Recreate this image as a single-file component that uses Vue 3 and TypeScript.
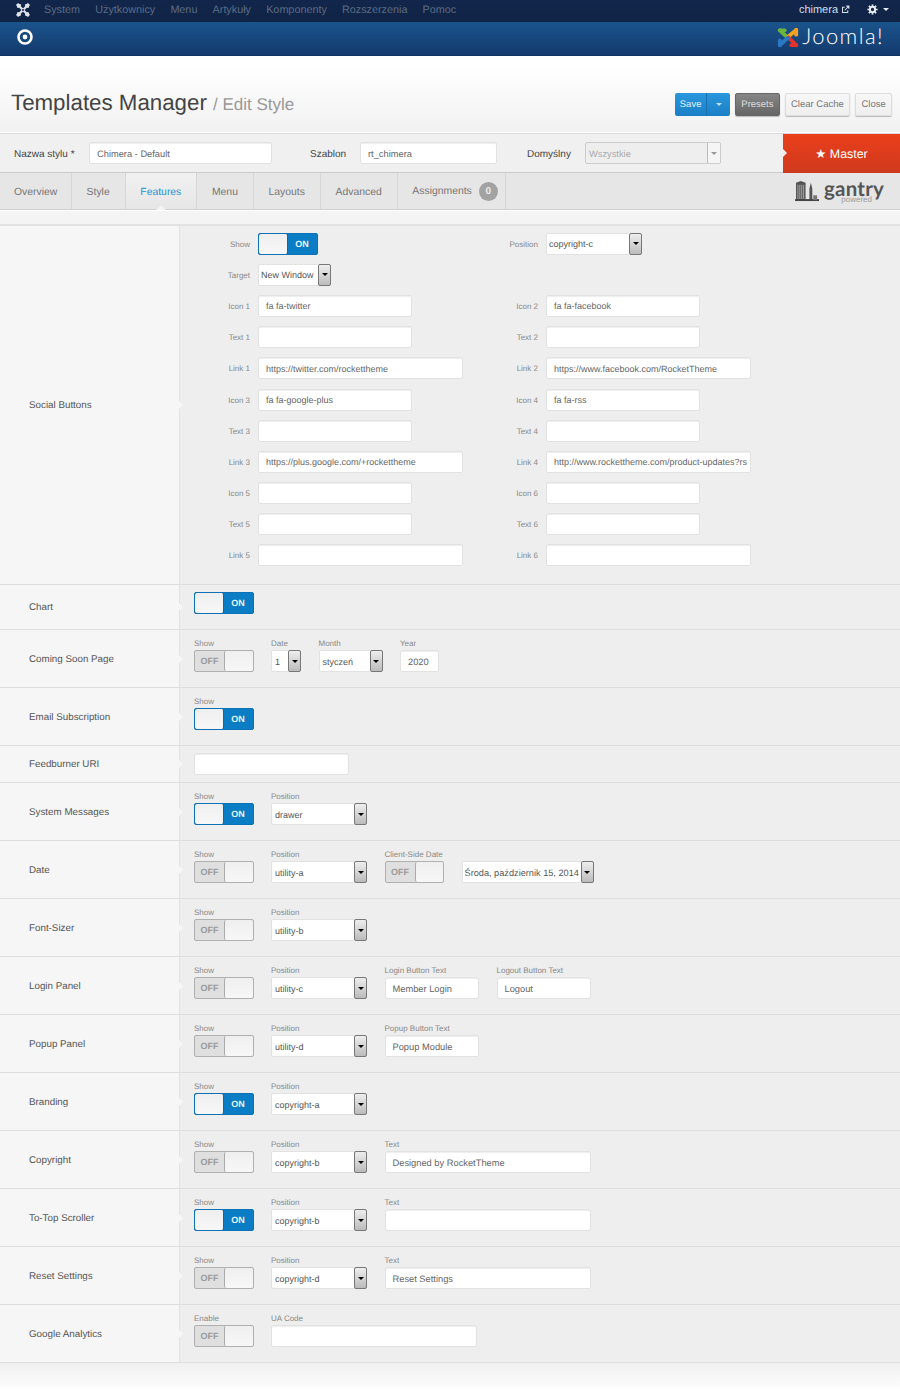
<script setup lang="ts">
type Field = { kind: 'toggle' | 'select' | 'input'; label?: string; on?: boolean; value?: string; width?: number }
type Row = { title: string; height: number; fields: Field[] }

const navItems = ['System', 'Użytkownicy', 'Menu', 'Artykuły', 'Komponenty', 'Rozszerzenia', 'Pomoc']
const tabs = ['Overview', 'Style', 'Features', 'Menu', 'Layouts', 'Advanced']

const sel = (label: string, value: string, width = 96): Field => ({ kind: 'select', label, value, width })
const inp = (label: string, value: string, width: number): Field => ({ kind: 'input', label, value, width })
const tog = (label: string, on: boolean): Field => ({ kind: 'toggle', label, on })

const social = [
  { l: 'Icon 1', lv: 'fa fa-twitter', lw: 154, r: 'Icon 2', rv: 'fa fa-facebook', rw: 154 },
  { l: 'Text 1', lv: '', lw: 154, r: 'Text 2', rv: '', rw: 154 },
  { l: 'Link 1', lv: 'https://twitter.com/rockettheme', lw: 205, r: 'Link 2', rv: 'https://www.facebook.com/RocketTheme', rw: 205 },
  { l: 'Icon 3', lv: 'fa fa-google-plus', lw: 154, r: 'Icon 4', rv: 'fa fa-rss', rw: 154 },
  { l: 'Text 3', lv: '', lw: 154, r: 'Text 4', rv: '', rw: 154 },
  { l: 'Link 3', lv: 'https://plus.google.com/+rockettheme', lw: 205, r: 'Link 4', rv: 'http://www.rockettheme.com/product-updates?rs', rw: 205 },
  { l: 'Icon 5', lv: '', lw: 154, r: 'Icon 6', rv: '', rw: 154 },
  { l: 'Text 5', lv: '', lw: 154, r: 'Text 6', rv: '', rw: 154 },
  { l: 'Link 5', lv: '', lw: 205, r: 'Link 6', rv: '', rw: 205 },
]

const rows: Row[] = [
  { title: 'Chart', height: 45, fields: [{ kind: 'toggle', on: true }] },
  { title: 'Coming Soon Page', height: 58, fields: [tog('Show', false), sel('Date', '1', 30), sel('Month', 'styczeń', 64), inp('Year', '2020', 39)] },
  { title: 'Email Subscription', height: 58, fields: [tog('Show', true)] },
  { title: 'Feedburner URI', height: 37, fields: [{ kind: 'input', value: '', width: 155 }] },
  { title: 'System Messages', height: 58, fields: [tog('Show', true), sel('Position', 'drawer')] },
  { title: 'Date', height: 58, fields: [tog('Show', false), sel('Position', 'utility-a'), tog('Client-Side Date', false), sel('', 'Środa, październik 15, 2014', 132)] },
  { title: 'Font-Sizer', height: 58, fields: [tog('Show', false), sel('Position', 'utility-b')] },
  { title: 'Login Panel', height: 58, fields: [tog('Show', false), sel('Position', 'utility-c'), inp('Login Button Text', 'Member Login', 94.5), inp('Logout Button Text', 'Logout', 94)] },
  { title: 'Popup Panel', height: 58, fields: [tog('Show', false), sel('Position', 'utility-d'), inp('Popup Button Text', 'Popup Module', 94)] },
  { title: 'Branding', height: 58, fields: [tog('Show', true), sel('Position', 'copyright-a')] },
  { title: 'Copyright', height: 58, fields: [tog('Show', false), sel('Position', 'copyright-b'), inp('Text', 'Designed by RocketTheme', 206)] },
  { title: 'To-Top Scroller', height: 58, fields: [tog('Show', true), sel('Position', 'copyright-b'), inp('Text', '', 206)] },
  { title: 'Reset Settings', height: 58, fields: [tog('Show', false), sel('Position', 'copyright-d'), inp('Text', 'Reset Settings', 206)] },
  { title: 'Google Analytics', height: 58, fields: [tog('Enable', false), inp('UA Code', '', 206)] },
]
</script>

<template>
  <div class="page">
    <div class="topbar">
      <svg class="jicon" viewBox="0 0 16 16" width="14" height="14">
        <g fill="none" stroke="#dfe3ea" stroke-width="2.600" stroke-linecap="round">
          <path d="M3.500 3.500 12.500 12.500" />
          <path d="M12.500 3.500 3.500 12.500" />
          <path d="M1.500 2.500h3M14.500 2.500h-3M1.500 13.500h3M14.500 13.500h-3" />
          <path d="M2.500 1.500v3M13.500 1.500v3M2.500 14.500v-3M13.500 14.500v-3" />
        </g>
        <circle cx="8" cy="8" r="1.100" fill="#12264c" />
      </svg>
      <nav class="nav">
        <span v-for="item in navItems" :key="item">{{ item }}</span>
      </nav>
      <div class="topright">
        <span class="user">chimera</span>
        <svg viewBox="0 0 12 12" width="9" height="9" class="ext">
          <path d="M9 7v3H2V3h3" fill="none" stroke="#d5dce6" stroke-width="1.400" />
          <path d="M5 7 10 2M7 1.500h3.500V5" fill="none" stroke="#d5dce6" stroke-width="1.400" />
        </svg>
        <svg viewBox="0 0 14 14" width="11" height="11" class="gear">
          <circle cx="7" cy="7" r="3.400" fill="none" stroke="#e8ecf2" stroke-width="2.600" />
          <path d="M7 .5v3M7 10.500v3M.5 7h3M10.500 7h3M2.400 2.400l2 2M9.600 9.600l2 2M11.600 2.400l-2 2M4.400 9.600l-2 2" stroke="#e8ecf2" stroke-width="2.200" />
        </svg>
        <i class="caret light"></i>
      </div>
    </div>

    <div class="brandbar">
      <svg class="target" viewBox="0 0 16 16" width="16" height="16">
        <circle cx="8" cy="8" r="6.500" fill="none" stroke="#fff" stroke-width="2.600" />
        <circle cx="8" cy="8" r="2.400" fill="#fff" />
      </svg>
      <div class="joomla">
        <svg viewBox="0 0 24 24" width="23" height="23">
          <g fill="none" stroke-width="4" stroke-linecap="round">
            <path d="M3 4.500 11 12" stroke="#6db33f" />
            <path d="M3 4.500h5" stroke="#6db33f" />
            <path d="M20 4 12 11" stroke="#f4a21f" />
            <path d="M20 4v5" stroke="#f4a21f" />
            <path d="M20 20 12 12" stroke="#e5342b" />
            <path d="M20 20h-5" stroke="#e5342b" />
            <path d="M3 20 11 12.500" stroke="#2a78c2" />
            <path d="M3 20v-5" stroke="#2a78c2" />
          </g>
        </svg>
        <span class="jtext">Joomla!</span>
      </div>
    </div>

    <div class="titlebar">
      <h1>Templates Manager <small>/ Edit Style</small></h1>
      <div class="actions">
        <div class="btn-save"><span class="save">Save</span><span class="savecaret"><i class="caret blue"></i></span></div>
        <span class="btn dark">Presets</span>
        <span class="btn">Clear Cache</span>
        <span class="btn">Close</span>
      </div>
    </div>

    <div class="stylebar">
      <label class="sb-label first">Nazwa stylu *</label>
      <span class="ctl sb-name">Chimera - Default</span>
      <label class="sb-label second">Szablon</label>
      <span class="ctl sb-tpl">rt_chimera</span>
      <label class="sb-label third">Domyślny</label>
      <span class="sb-default">
        <span class="sb-defval">Wszystkie</span>
        <span class="sb-defbtn"><i class="caret grey"></i></span>
      </span>
      <div class="master"><span class="notch"></span>★ Master</div>
    </div>

    <div class="tabs">
      <span v-for="tab in tabs" :key="tab" class="tab" :class="{ active: tab === 'Features' }">{{ tab }}</span>
      <span class="tab assign">Assignments <b class="badge">0</b></span>
      <div class="gantry">
        <svg viewBox="0 0 26 24" width="25" height="23">
          <path d="M1 22V4l5-2 5 2v18zM15 22V10l1.500-6 1.500 6v12z" fill="#555" />
          <path d="M3 6v15M5 6v15M7 6v15M9 6v15" stroke="#ccc" stroke-width=".7" />
          <rect x="0" y="21" width="25" height="2" fill="#444" />
          <path d="M19 22v-5h4v5z" fill="#777" />
        </svg>
        <span class="gtext">gantry<em>powered</em></span>
      </div>
    </div>

    <div class="spacer"></div>

    <section class="row social">
      <div class="rowtitle">Social Buttons<span class="arrow"></span></div>
      <div class="rowbody sgrid">
        <div class="spair">
          <span class="slabel">Show</span>
          <span class="toggle on"><span class="knob"></span><span class="state">ON</span></span>
        </div>
        <div class="spair">
          <span class="slabel">Position</span>
          <span class="select pos"><span class="selval">copyright-c</span><span class="selbtn"><i class="caret black"></i></span></span>
        </div>
        <div class="spair">
          <span class="slabel">Target</span>
          <span class="select tgt"><span class="selval">New Window</span><span class="selbtn"><i class="caret black"></i></span></span>
        </div>
        <div class="spair"></div>
        <template v-for="s in social" :key="s.l">
          <div class="spair">
            <span class="slabel">{{ s.l }}</span>
            <span class="ctl small" :style="{ width: s.lw + 'px' }">{{ s.lv }}</span>
          </div>
          <div class="spair">
            <span class="slabel">{{ s.r }}</span>
            <span class="ctl small" :style="{ width: s.rw + 'px' }">{{ s.rv }}</span>
          </div>
        </template>
      </div>
    </section>

    <section v-for="row in rows" :key="row.title" class="row" :style="{ height: row.height + 'px' }">
      <div class="rowtitle">{{ row.title }}<span class="arrow"></span></div>
      <div class="rowbody fields">
        <div v-for="(f, i) in row.fields" :key="i" class="field">
          <span v-if="f.label !== undefined" class="flabel">{{ f.label }}</span>
          <span v-if="f.kind === 'toggle'" class="toggle" :class="{ on: f.on }">
            <template v-if="f.on"><span class="knob"></span><span class="state">ON</span></template>
            <template v-else><span class="state">OFF</span><span class="knob"></span></template>
          </span>
          <span v-else-if="f.kind === 'select'" class="select" :class="{ wide: f.label === '' }" :style="{ width: f.width + 'px' }">
            <span class="selval">{{ f.value }}</span>
            <span class="selbtn"><i class="caret black"></i></span>
          </span>
          <span v-else class="ctl" :style="{ width: f.width + 'px' }">{{ f.value }}</span>
        </div>
      </div>
    </section>

    <div class="footer"></div>
  </div>
</template>

<style scoped>
.page {
  width: 900px;
  height: 1389px;
  overflow: hidden;
  background: #f4f4f4;
  font-family: "Liberation Sans", Arial, sans-serif;
  color: #555;
  text-rendering: geometricPrecision;
}
.topbar {
  height: 22px;
  background: linear-gradient(#12264c, #0f2444);
  display: flex;
  align-items: center;
  padding: 0 11px 3px 16px;
  box-sizing: border-box;
  font-size: 10.800px;
}
.jicon { margin-right: 14px; }
.nav { display: flex; gap: 15.200px; color: #5d6c84; }
.topright { margin-left: auto; display: flex; align-items: center; color: #d5dce6; font-size: 11px; }
.user { margin-right: 3px; }
.ext { margin-right: 17px; }
.gear { margin-right: 5px; }
.caret { display: inline-block; width: 0; height: 0; border-left: 3px solid transparent; border-right: 3px solid transparent; border-top: 3px solid #000; }
.caret.light { border-top-color: #e8ecf2; }
.caret.blue { border-top-color: #bfe0f6; }
.caret.grey { border-top-color: #999; }
.brandbar {
  height: 34px;
  background: linear-gradient(#1a548c, #143a6e);
  border-bottom: 1px solid #10325e;
  box-sizing: border-box;
  display: flex;
  align-items: center;
  justify-content: space-between;
  padding: 0 16px 3px 17px;
}
.joomla { display: flex; align-items: center; gap: 2px; }
.jtext {
  font-family: Lato, "Open Sans", sans-serif;
  font-weight: 300;
  font-size: 22px;
  line-height: 22px;
  color: #fff;
  letter-spacing: 1.400px;
  margin-top: -2px;
}
.titlebar {
  height: 78px;
  background: linear-gradient(#fff 15%, #f1f1f1);
  border-bottom: 1px solid #d9d9d9;
  box-shadow: inset 0 -1px 0 #fff;
  box-sizing: border-box;
  display: flex;
  align-items: center;
  justify-content: space-between;
  padding: 16px 8px 0 11px;
}
h1 {
  margin: 0;
  font-size: 22.300px;
  font-weight: 400;
  color: #444;
  white-space: nowrap;
}
h1 small { font-size: 17px; color: #999; }
.actions { display: flex; align-items: center; gap: 5px; font-size: 9.500px; margin-top: 4px; }
.btn-save { display: flex; height: 23px; border-radius: 2px; overflow: hidden; color: #e3f2fc; }
.save { width: 31px; background: linear-gradient(#2a97dc, #1a7fc6); display: flex; align-items: center; justify-content: center; border-right: 1px solid #1870ad; }
.savecaret { width: 23px; background: linear-gradient(#2a97dc, #1a7fc6); display: flex; align-items: center; justify-content: center; }
.btn {
  height: 23px;
  display: flex;
  align-items: center;
  padding: 0 5.300px;
  border: 1px solid #ddd;
  box-sizing: border-box;
  background: linear-gradient(#f7f7f7, #efefef);
  color: #777;
  box-shadow: 0 1px 1px #bbb;
  border-radius: 2px;
}
.btn.dark { background: linear-gradient(#858585, #666); border-color: #666; color: #ddd; padding: 0 5.200px; }
.stylebar {
  height: 39px;
  background: #f0f0f0;
  display: flex;
  align-items: center;
  padding-left: 14px;
  font-size: 10px;
  border-bottom: 1px solid #c9c9c9;
  box-sizing: border-box;
  position: relative;
}
.sb-label { color: #444; padding-top: 2px; }
.first { width: 75px; }
.second { margin-left: 38px; width: 50px; }
.third { margin-left: 30px; width: 58px; }
.sb-name { width: 183px; }
.sb-tpl { width: 137px; background: #eee; color: #888; }
.sb-default {
  width: 136px;
  height: 22px;
  box-sizing: border-box;
  border: 1px solid #ccc;
  border-radius: 2px;
  background: #eee;
  display: flex;
  align-items: center;
  color: #aaa;
  font-size: 9.300px;
}
.sb-defval { flex: 1; padding-left: 3px; padding-top: 1px; }
.sb-defbtn { width: 12px; height: 100%; background: #f5f5f5; border-left: 1px solid #bbb; display: flex; align-items: center; justify-content: center; }
.master {
  position: absolute;
  right: 0;
  top: 0;
  width: 117px;
  height: 39px;
  background: linear-gradient(#ea3f1c, #cf3a1c);
  color: #fff;
  font-size: 12.400px;
  display: flex;
  align-items: center;
  justify-content: center;
}
.notch {
  position: absolute;
  left: 0;
  top: 15px;
  border-left: 4px solid #f0f0f0;
  border-top: 4px solid transparent;
  border-bottom: 4px solid transparent;
}
.tabs {
  height: 37px;
  background: #e6e6e6;
  border-bottom: 1px solid #cfcfcf;
  box-shadow: 0 1px 0 #fff;
  box-sizing: border-box;
  display: flex;
  font-size: 10.400px;
  color: #777;
  position: relative;
}
.tab {
  display: flex;
  align-items: center;
  padding: 2px 14.800px 0;
  border-right: 1px solid #d6d6d6;
  position: relative;
}
.tab:first-child { padding-left: 14px; padding-right: 13.500px; }
.tab.active { background: linear-gradient(#f1f1f1, #e6e6e6); color: #2a93d5; }
.tab.active::after {
  content: "";
  position: absolute;
  left: 50%;
  bottom: -1px;
  margin-left: -5px;
  border-left: 5px solid transparent;
  border-right: 5px solid transparent;
  border-bottom: 5px solid #f4f4f4;
}
.assign { gap: 7px; padding-right: 7px; padding-top: 0; }
.badge {
  width: 19px;
  height: 19px;
  border-radius: 50%;
  background: #a2a2a2;
  color: #eee;
  font-size: 10px;
  display: flex;
  align-items: center;
  justify-content: center;
}
.gantry { position: absolute; right: 16px; top: 6px; display: flex; align-items: flex-start; gap: 4px; }
.gtext {
  position: relative;
  font-family: Lato, sans-serif;
  font-size: 20.500px;
  line-height: 20px;
  font-weight: 700;
  color: #555;
  letter-spacing: .2px;
  height: 24px;
}
.gtext em {
  position: absolute;
  right: 12px;
  top: 16px;
  font-family: "Liberation Sans", sans-serif;
  font-style: normal;
  font-weight: 400;
  font-size: 8px;
  line-height: 9px;
  letter-spacing: 0;
  color: #999;
}
.spacer { height: 16px; border-bottom: 2px solid #e2e2e2; box-sizing: border-box; }
.row {
  display: flex;
  border-bottom: 1px solid #dedede;
  box-shadow: inset 0 -1px 0 #fafafa;
  box-sizing: border-box;
}
.social { height: 359px; }
.rowtitle {
  width: 180px;
  flex: none;
  box-sizing: border-box;
  background: #f6f6f6;
  border-right: 1px solid #e2e2e2;
  padding: 1px 0 0 29px;
  display: flex;
  align-items: center;
  font-size: 9.800px;
  color: #555;
  position: relative;
}
.arrow {
  position: absolute;
  right: -4px;
  top: 50%;
  margin-top: -4px;
  border-left: 4px solid #f6f6f6;
  border-top: 4px solid transparent;
  border-bottom: 4px solid transparent;
}
.rowbody { flex: 1; background: #eeeeee; }
.sgrid {
  display: grid;
  grid-template-columns: 288px 1fr;
  grid-auto-rows: 31.200px;
  padding-top: 2px;
}
.spair { display: flex; align-items: center; }
.slabel {
  width: 78px;
  text-align: right;
  padding: 1px 8px 0 0;
  box-sizing: border-box;
  font-size: 8px;
  color: #888;
  flex: none;
}
.fields {
  display: flex;
  align-items: flex-start;
  gap: 17.500px;
  padding-left: 14px;
  padding-top: 7px;
  box-sizing: border-box;
}
.field { display: flex; flex-direction: column; gap: 1px; }
.flabel { font-size: 8px; line-height: 10px; height: 10px; margin-top: 2px; color: #888; white-space: nowrap; }
.ctl {
  display: flex;
  align-items: center;
  height: 22px;
  box-sizing: border-box;
  background: #fff;
  border: 1px solid #e2e2e2;
  border-radius: 2px;
  box-shadow: inset 0 1px 1px #eee;
  padding: 1px 0 0 7px;
  font-size: 9.300px;
  color: #666;
  white-space: nowrap;
  overflow: hidden;
}
.ctl.small { font-size: 9px; }
.toggle {
  width: 59.500px;
  height: 22px;
  display: flex;
  box-sizing: border-box;
  border: 1px solid #b0b0b0;
  border-radius: 2px;
  background: #dfdfdf;
  overflow: hidden;
  font-size: 9px;
  font-weight: 700;
  flex: none;
}
.toggle .state { width: 29px; display: flex; align-items: center; justify-content: center; color: #999; }
.toggle .knob { flex: 1; background: linear-gradient(#efefef, #f7f7f7); border-left: 1px solid #aaa; border-radius: 2px; }
.toggle.on { border-color: #0e70b5; background: #0b7dc4; }
.toggle.on .state { color: #e8f4fc; }
.toggle.on .knob { border-left: 0; border-right: 1px solid #2a5f8f; }
.select {
  height: 22px;
  display: flex;
  align-items: center;
  background: #fff;
  border: 1px solid #e2e2e2;
  border-radius: 2px;
  box-sizing: border-box;
  font-size: 9px;
  color: #555;
  white-space: nowrap;
  flex: none;
}
.select.wide { font-size: 9.200px; }
.select.pos { width: 96px; }
.select.tgt { width: 73px; }
.selval { flex: 1; padding: 1px 0 0 2px; overflow: hidden; }
.fields .select:not(.wide) .selval { padding-left: 3px; }
.selbtn {
  width: 13px;
  height: 22px;
  margin-right: -1px;
  box-sizing: border-box;
  border: 1px solid #777;
  border-radius: 2px;
  background: linear-gradient(#eee, #bbb);
  display: flex;
  align-items: center;
  justify-content: center;
  flex: none;
}
.footer { height: 27px; background: linear-gradient(#f0f0f0, #fdfdfd); }
</style>
